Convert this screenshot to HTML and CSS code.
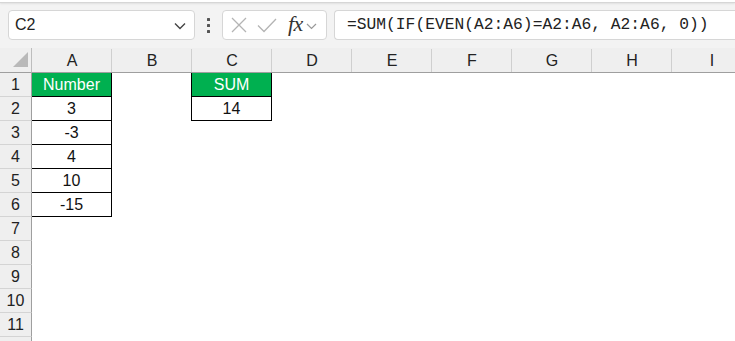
FILE: index.html
```html
<!DOCTYPE html>
<html>
<head>
<meta charset="utf-8">
<link rel="stylesheet" href="styles.css">
</head>
<body>
<div class="topstrip"></div>
<div class="fbar">
  <div class="namebox">
    <span class="nb-text">C2</span>
    <svg class="chev" width="12" height="8" viewBox="0 0 12 8"><polyline points="1,1.5 6,6.5 11,1.5" fill="none" stroke="#444" stroke-width="1.4"/></svg>
  </div>
  <div class="dots"><span></span><span></span><span></span></div>
  <div class="fxbox">
    <svg width="16" height="16" viewBox="0 0 16 16"><path d="M1 1 L15 15 M15 1 L1 15" stroke="#b4b4b4" stroke-width="1.3" fill="none"/></svg>
    <svg width="20" height="16" viewBox="0 0 20 16"><polyline points="1,8.5 7,14.5 19,2" stroke="#b4b4b4" stroke-width="1.3" fill="none"/></svg>
    <span class="fx">fx</span>
    <svg class="chev2" width="11" height="7" viewBox="0 0 11 7"><polyline points="1,1 5.5,5.5 10,1" fill="none" stroke="#999" stroke-width="1.2"/></svg>
  </div>
  <div class="formula">=SUM(IF(EVEN(A2:A6)=A2:A6, A2:A6, 0))</div>
</div>
<div class="sheet">
  <div class="corner"><span class="tri"></span></div>
  <div class="ch">A</div><div class="ch">B</div><div class="ch">C</div><div class="ch">D</div><div class="ch">E</div><div class="ch">F</div><div class="ch">G</div><div class="ch">H</div><div class="ch">I</div>

  <div class="rh">1</div><div class="c bd green">Number</div><div class="c bdr"></div><div class="c bd green">SUM</div><div class="c"></div><div class="c"></div><div class="c"></div><div class="c"></div><div class="c"></div><div class="c"></div>
  <div class="rh">2</div><div class="c bd">3</div><div class="c bdr"></div><div class="c bd">14</div><div class="c"></div><div class="c"></div><div class="c"></div><div class="c"></div><div class="c"></div><div class="c"></div>
  <div class="rh">3</div><div class="c bd">-3</div><div class="c"></div><div class="c"></div><div class="c"></div><div class="c"></div><div class="c"></div><div class="c"></div><div class="c"></div><div class="c"></div>
  <div class="rh">4</div><div class="c bd">4</div><div class="c"></div><div class="c"></div><div class="c"></div><div class="c"></div><div class="c"></div><div class="c"></div><div class="c"></div><div class="c"></div>
  <div class="rh">5</div><div class="c bd">10</div><div class="c"></div><div class="c"></div><div class="c"></div><div class="c"></div><div class="c"></div><div class="c"></div><div class="c"></div><div class="c"></div>
  <div class="rh">6</div><div class="c bd">-15</div><div class="c"></div><div class="c"></div><div class="c"></div><div class="c"></div><div class="c"></div><div class="c"></div><div class="c"></div><div class="c"></div>
  <div class="rh">7</div><div class="c"></div><div class="c"></div><div class="c"></div><div class="c"></div><div class="c"></div><div class="c"></div><div class="c"></div><div class="c"></div><div class="c"></div>
  <div class="rh">8</div><div class="c"></div><div class="c"></div><div class="c"></div><div class="c"></div><div class="c"></div><div class="c"></div><div class="c"></div><div class="c"></div><div class="c"></div>
  <div class="rh">9</div><div class="c"></div><div class="c"></div><div class="c"></div><div class="c"></div><div class="c"></div><div class="c"></div><div class="c"></div><div class="c"></div><div class="c"></div>
  <div class="rh">10</div><div class="c"></div><div class="c"></div><div class="c"></div><div class="c"></div><div class="c"></div><div class="c"></div><div class="c"></div><div class="c"></div><div class="c"></div>
  <div class="rh">11</div><div class="c"></div><div class="c"></div><div class="c"></div><div class="c"></div><div class="c"></div><div class="c"></div><div class="c"></div><div class="c"></div><div class="c"></div>
  <div class="rh rh-last"></div><div class="c"></div><div class="c"></div><div class="c"></div><div class="c"></div><div class="c"></div><div class="c"></div><div class="c"></div><div class="c"></div><div class="c"></div>
</div>
</body>
</html>
```
FILE: styles.css
```css
* { box-sizing: border-box; }
html, body { margin: 0; padding: 0; background: #fff; overflow: hidden; width: 735px; height: 341px; }
body { font-family: "Liberation Sans", Arial, sans-serif; color: #1a1a1a; }

.topstrip { height: 3px; background: #fff; border-bottom: 1px solid #d6d6d6; box-shadow: 0 1px 2px rgba(0,0,0,0.08); position: relative; z-index: 1; }

.fbar {
  height: 45px;
  background: #f3f3f3;
  display: flex;
  align-items: flex-start;
  padding: 7px 0 0 8px;
}
.namebox {
  width: 187px; height: 30px;
  background: #fff; border: 1px solid #d6d6d6; border-radius: 4px;
  display: flex; align-items: center; justify-content: space-between;
  padding: 0 8px 0 6px;
}
.nb-text { font-size: 16px; color: #222; }
.chev { margin-top: 2px; }
.dots { width: 27px; height: 30px; display: flex; flex-direction: column; align-items: center; justify-content: center; gap: 3px; }
.dots span { width: 3px; height: 3px; background: #555; border-radius: 0.5px; }
.fxbox {
  width: 105px; height: 30px;
  background: #fff; border: 1px solid #d6d6d6; border-radius: 4px;
  display: flex; align-items: center;
  padding: 0 0 0 8px;
}
.fxbox svg:nth-child(2) { margin-left: 10px; }
.fx { font-family: "Liberation Serif", "Times New Roman", serif; font-style: italic; font-size: 22px; color: #333; margin-left: 11px; margin-top: -2px; letter-spacing: -0.5px; }
.chev2 { margin-left: 3px; margin-top: 2px; }
.formula {
  margin-left: 7px;
  flex: 1; height: 30px;
  background: #fff; border: 1px solid #d6d6d6; border-right: none; border-radius: 4px 0 0 4px;
  font-family: "Liberation Mono", "Courier New", monospace; font-size: 16.3px; color: #222;
  padding-left: 12px; line-height: 27px;
  white-space: nowrap;
}

.sheet {
  display: grid;
  grid-template-columns: 32px repeat(9, 80px);
  grid-template-rows: 25px;
  grid-auto-rows: 24px;
  font-size: 16px;
}
.corner { background: #efefef; border-right: 1px solid #bdbdbd; border-bottom: 1px solid #9f9f9f; position: relative; }
.tri { position: absolute; left: 13px; top: 4px; width: 15px; height: 15px; background: #b9b9b9; clip-path: polygon(100% 0, 100% 100%, 0 100%); }
.ch {
  background: #efefef; border-bottom: 1px solid #9f9f9f;
  display: flex; align-items: center; justify-content: center; color: #222; padding-top: 2px;
  position: relative;
}
.ch::after { content: ""; position: absolute; right: 0; top: 1px; bottom: 0; width: 1px; background: #cfcfcf; }
.rh {
  background: #efefef; border-right: 1px solid #9f9f9f; border-bottom: 1px solid #d4d4d4;
  display: flex; align-items: center; justify-content: center; color: #222; padding-top: 1px;
}
.c { display: flex; align-items: center; justify-content: center; color: #111; padding-top: 1px; }
.bd { border-right: 1px solid #000; border-bottom: 1px solid #000; }
.bdr { border-right: 1px solid #000; }
.green { background: #00b050; color: #fff; }
```
